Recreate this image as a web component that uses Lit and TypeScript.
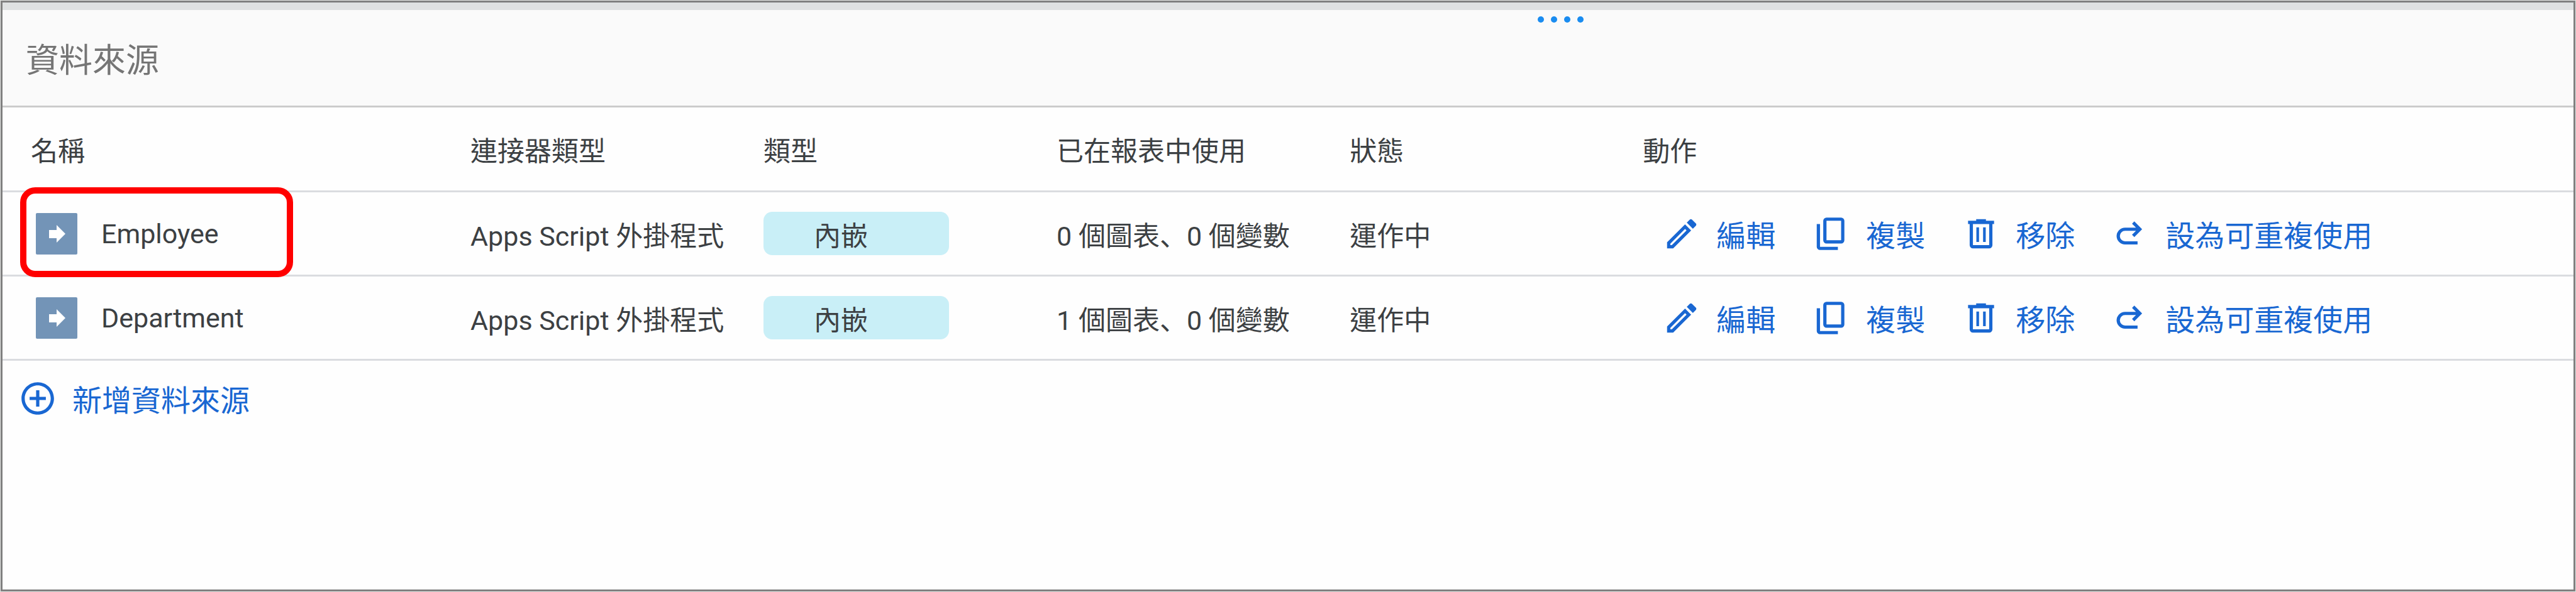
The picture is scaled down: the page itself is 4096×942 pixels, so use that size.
import { LitElement, html, css, svg } from "lit";
import { customElement } from "lit/decorators.js";

interface Source {
  name: string;
  connector: string;
  kind: string;
  charts: string;
  variables: string;
  status: string;
  highlighted: boolean;
}

const SOURCES: Source[] = [
  { name: "Employee", connector: "Apps Script 外掛程式", kind: "內嵌", charts: "0 個圖表", variables: "0 個變數", status: "運作中", highlighted: true },
  { name: "Department", connector: "Apps Script 外掛程式", kind: "內嵌", charts: "1 個圖表", variables: "0 個變數", status: "運作中", highlighted: false },
];

const COLUMNS = ["名稱", "連接器類型", "類型", "已在報表中使用", "狀態", "動作"];

const EDIT = svg`<svg class="icon" viewBox="0 0 24 24" aria-hidden="true"><path d="M14.06 9.02l.92.92L5.92 19H5v-.92l9.06-9.06M17.66 3c-.25 0-.51.1-.7.29l-1.83 1.83 3.75 3.75 1.83-1.83c.39-.39.39-1.02 0-1.41l-2.34-2.34c-.2-.2-.45-.29-.71-.29zm-3.6 3.19L3 17.25V21h3.75L17.81 9.94l-3.75-3.75z"/></svg>`;
const COPY = svg`<svg class="icon" viewBox="0 -960 960 960" aria-hidden="true"><path d="M360-240q-33 0-56.5-23.5T280-320v-480q0-33 23.5-56.5T360-880h360q33 0 56.5 23.5T800-800v480q0 33-23.5 56.5T720-240H360Zm0-80h360v-480H360v480ZM200-80q-33 0-56.5-23.5T120-160v-560h80v560h440v80H200Z"/></svg>`;
const TRASH = svg`<svg class="icon" viewBox="0 -960 960 960" aria-hidden="true"><path d="M280-120q-33 0-56.5-23.5T200-200v-520h-40v-80h200v-40h240v40h200v80h-40v520q0 33-23.5 56.5T680-120H280Zm400-600H280v520h400v-520ZM365-280h65v-360h-65v360Zm165 0h65v-360h-65v360Z"/></svg>`;
const REDO = svg`<svg class="icon" viewBox="0 0 24 24" aria-hidden="true"><path d="M16.2 17.6H8.5C6.2 17.6 4.3 15.7 4.3 13.4S6.2 9.2 8.5 9.2H17M13.5 5.1L17.6 9.2L13.5 13.3" fill="none" stroke="currentColor" stroke-width="2"/></svg>`;
const ADD = svg`<svg class="icon" viewBox="0 0 24 24" aria-hidden="true"><path d="M13 7h-2v4H7v2h4v4h2v-4h4v-2h-4V7zm-1-5C6.48 2 2 6.48 2 12s4.48 10 10 10 10-4.48 10-10S17.52 2 12 2zm0 18c-4.41 0-8-3.59-8-8s3.59-8 8-8 8 3.59 8 8-3.59 8-8 8z"/></svg>`;
const SOURCE = svg`<svg class="source-icon" viewBox="0 0 66 66" aria-hidden="true"><rect width="66" height="66" rx="2" fill="#7394b7"/><path d="M21 27h12v-8l14 14-14 14v-7H21z" fill="#fff"/></svg>`;

const ACTIONS = [
  { label: "編輯", icon: EDIT },
  { label: "複製", icon: COPY },
  { label: "移除", icon: TRASH },
  { label: "設為可重複使用", icon: REDO },
];

@customElement("app-root")
export class AppRoot extends LitElement {
  static styles = css`
    :host {
      display: block;
      box-sizing: border-box;
      min-height: 100vh;
      padding: 1px;
      background: #e4e6e4;
      color: #3c4043;
      font-family: Roboto, "Noto Sans CJK TC", sans-serif;
      font-size: 43px;
    }
    .panel {
      box-sizing: border-box;
      min-height: calc(100vh - 2px);
      border: 3px solid #808080;
      background: #fefefe;
    }
    .header {
      position: relative;
      display: flex;
      align-items: center;
      box-sizing: border-box;
      height: 167px;
      padding: 0 37px;
      border-top: 12px solid #dfe1e2;
      border-bottom: 3px solid #cccccc;
      background: #fafafa;
    }
    .title {
      margin: 0;
      color: #757575;
      font-size: 53px;
      font-weight: 400;
    }
    .handle {
      position: absolute;
      top: 10px;
      left: 59.7%;
      display: flex;
      gap: 11px;
    }
    .dot {
      width: 10px;
      height: 10px;
      border-radius: 50%;
      background: #1a8cf0;
    }
    .sources {
      width: 100%;
      table-layout: fixed;
      border-collapse: separate;
      border-spacing: 0;
    }
    .col-name { width: 17.1%; }
    .col { width: 11.4%; }
    .cell {
      position: relative;
      box-sizing: border-box;
      height: 134px;
      padding: 0 0 0 45px;
      border-bottom: 3px solid #dadce0;
      font-weight: 400;
      text-align: left;
      vertical-align: middle;
      white-space: nowrap;
    }
    .heading { height: 135px; }
    .name {
      display: flex;
      align-items: center;
      gap: 38px;
      padding-left: 8px;
    }
    .source-icon {
      width: 66px;
      height: 66px;
      flex: none;
    }
    .marker {
      position: absolute;
      top: -8px;
      left: 28px;
      box-sizing: border-box;
      width: 434px;
      height: 143px;
      border: 10px solid #ff0000;
      border-radius: 24px;
      pointer-events: none;
    }
    .comma { font-family: "Noto Sans CJK JP", sans-serif; }
    .kind {
      display: flex;
      align-items: center;
      box-sizing: border-box;
      width: 70%;
      height: 69px;
      padding-left: 80px;
      border-radius: 14px;
      background: #c9eff7;
    }
    .actions {
      display: flex;
      align-items: center;
      gap: 58px;
      padding-left: 31px;
    }
    .link {
      display: flex;
      align-items: center;
      gap: 24px;
      padding: 0;
      border: 0;
      background: none;
      color: #1967d2;
      font-family: inherit;
      font-size: 47px;
      cursor: pointer;
    }
    .icon {
      width: 62px;
      height: 62px;
      flex: none;
      fill: currentColor;
    }
    .footer { padding: 25px; }
  `;

  render() {
    return html`
      <main class="panel">
        <header class="header">
          <h1 class="title">資料來源</h1>
          <div class="handle">
            <span class="dot"></span><span class="dot"></span><span class="dot"></span><span class="dot"></span>
          </div>
        </header>
        <table class="sources">
          <colgroup>
            <col class="col-name" /><col class="col" /><col class="col" /><col class="col" /><col class="col" /><col />
          </colgroup>
          <thead>
            <tr>${COLUMNS.map((c) => html`<th class="cell heading" scope="col">${c}</th>`)}</tr>
          </thead>
          <tbody>
            ${SOURCES.map(
              (s) => html`<tr>
                <td class="cell">
                  <div class="name">${SOURCE}<span>${s.name}</span></div>
                  ${s.highlighted ? html`<div class="marker"></div>` : null}
                </td>
                <td class="cell">${s.connector}</td>
                <td class="cell"><div class="kind">${s.kind}</div></td>
                <td class="cell">${s.charts}<span class="comma" lang="ja">、</span>${s.variables}</td>
                <td class="cell">${s.status}</td>
                <td class="cell">
                  <div class="actions">
                    ${ACTIONS.map((a) => html`<button class="link" type="button">${a.icon}<span>${a.label}</span></button>`)}
                  </div>
                </td>
              </tr>`
            )}
          </tbody>
        </table>
        <footer class="footer">
          <button class="link" type="button">${ADD}<span>新增資料來源</span></button>
        </footer>
      </main>
    `;
  }
}
